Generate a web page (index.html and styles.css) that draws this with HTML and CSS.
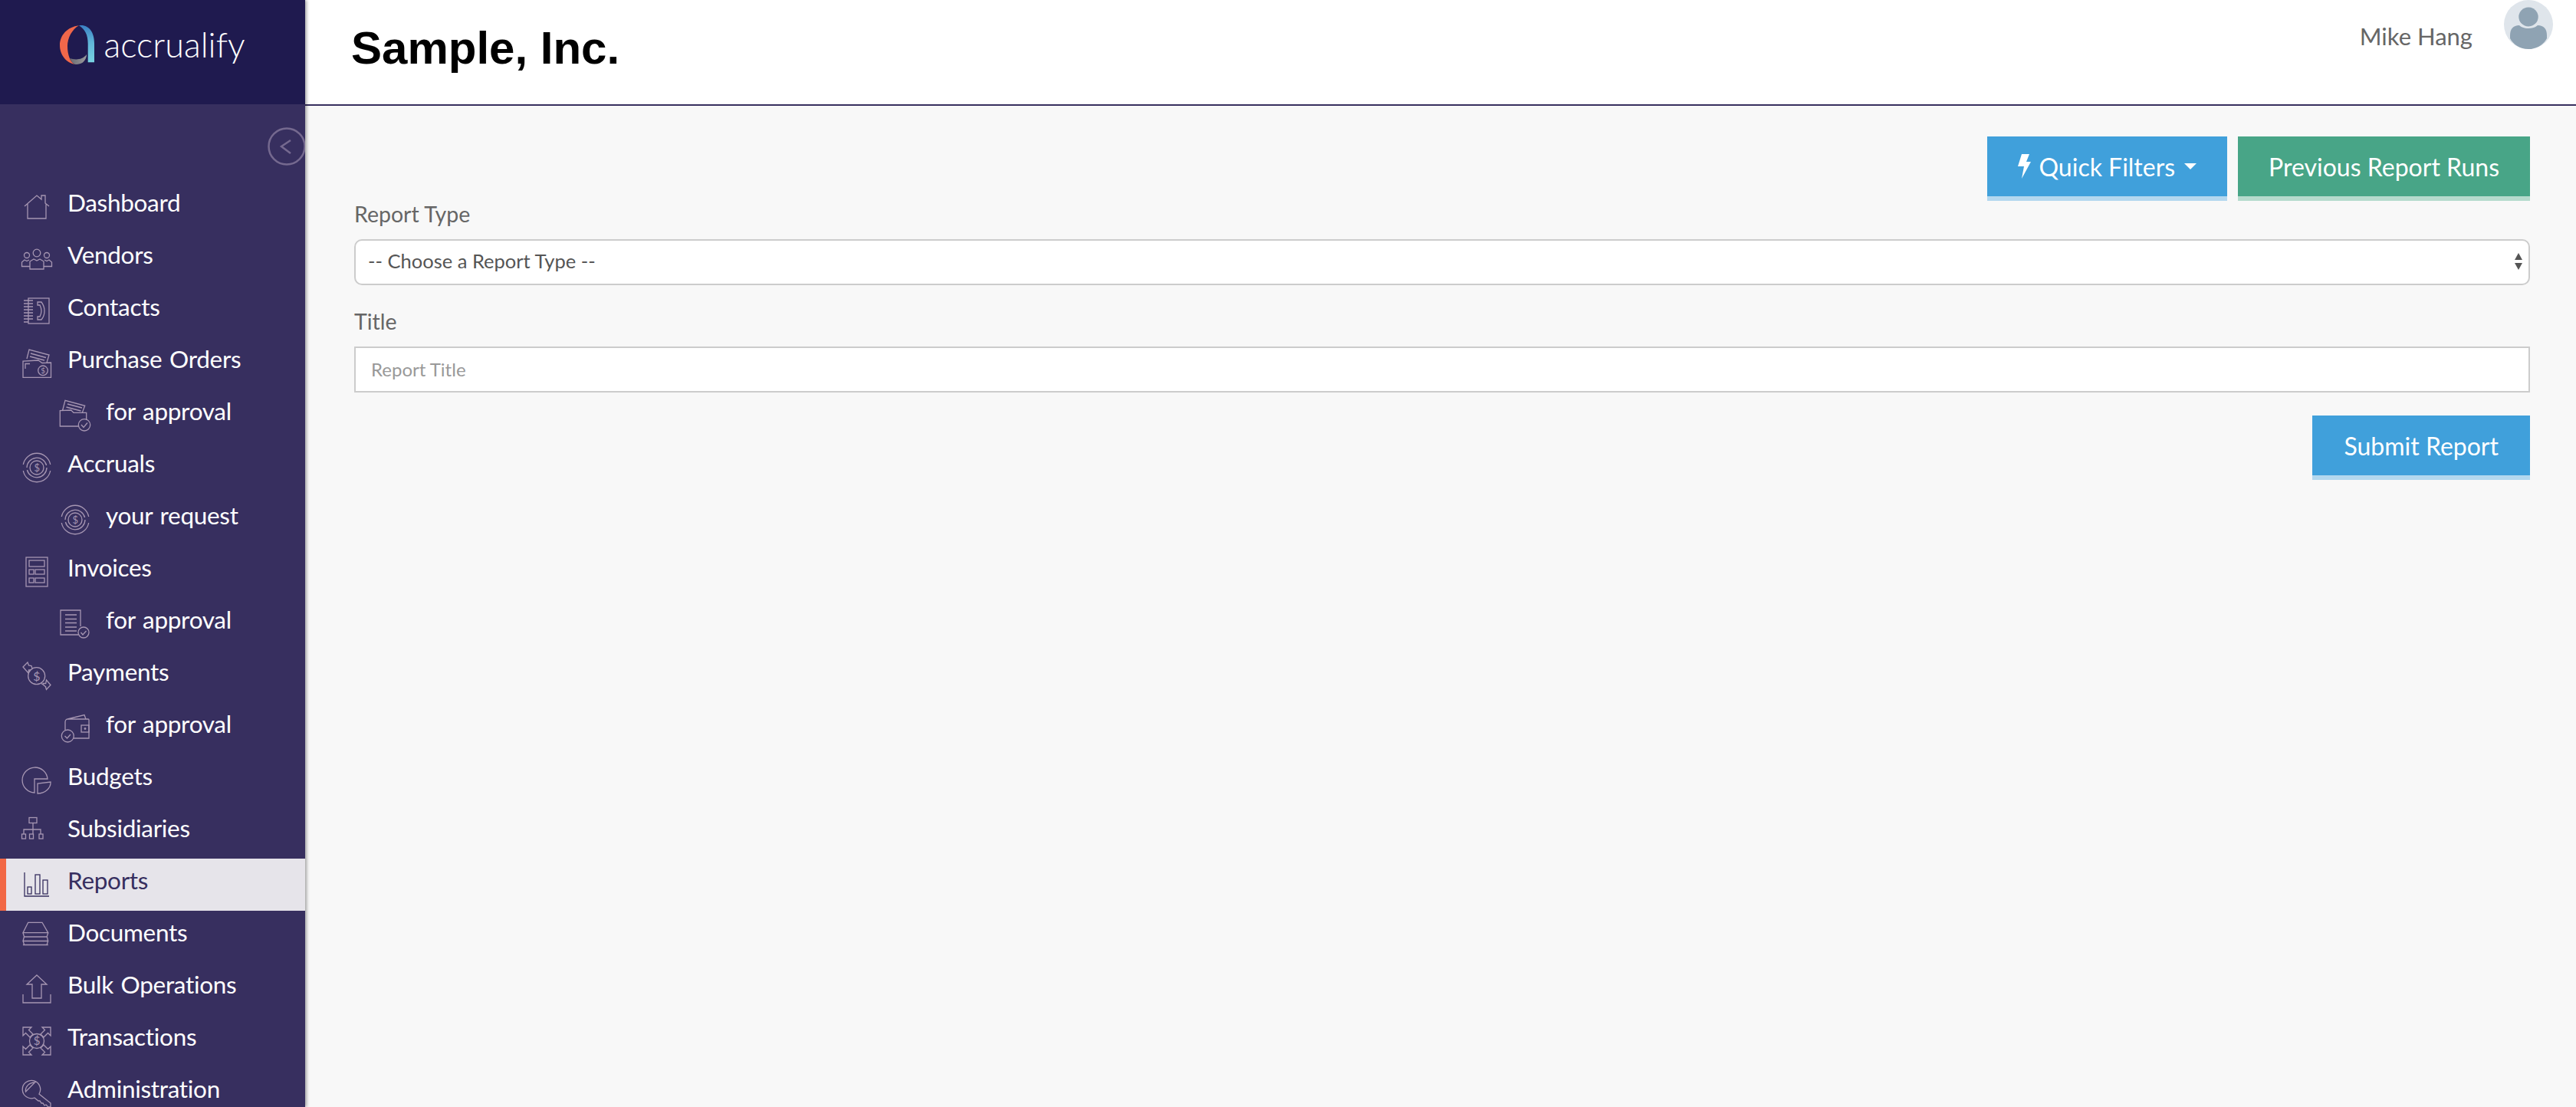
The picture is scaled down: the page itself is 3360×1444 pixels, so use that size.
FILE: index.html
```html
<!DOCTYPE html>
<html>
<head>
    <title>Reports - Sample, Inc.</title>
    <link rel="stylesheet" href="styles.css">
</head>
<body>
    <svg class="defs" width="0" height="0">
        <defs>
            <linearGradient id="ribbon" x1="0" y1="0" x2="0" y2="1">
                <stop offset="0" stop-color="#3a80c4"/>
                <stop offset="0.45" stop-color="#5fb4d8"/>
                <stop offset="1" stop-color="#79d2e2"/>
            </linearGradient>
            <linearGradient id="ribbonGray" x1="0" y1="0" x2="1" y2="0">
                <stop offset="0" stop-color="#6a6a70"/>
                <stop offset="1" stop-color="#9a9a9e"/>
            </linearGradient>
        </defs>
    </svg>

    <div class="app">
        <aside class="sidebar">
            <div class="brand">
                <svg class="brand-mark" width="46" height="52" viewBox="0 0 46 52">
                    <path fill="#f0674a" d="M25 1.300C10 3 0 14 0 27c0 12 8 23 20 25-6-2-10-12-10-24C10 18 16 6 25 1.300z"/>
                    <path fill="url(#ribbonGray)" d="M13 44c6 2 16 3 22-5 0 4-2 8-5 10.500-3 2-7 2.500-10 2.500-3-1-5-4-7-8z"/>
                    <path fill="url(#ribbon)" d="M25 1.300c12-2 20 8 20 23v25h-8.300V25C36.700 14 33 6 25 1.300z"/>
                </svg>
                <span class="brand-name">accrualify</span>
            </div>

            <button class="collapse" type="button" aria-label="Collapse menu">
                <svg width="52" height="52" viewBox="0 0 52 52"><circle cx="26" cy="26" r="23.500"/><path d="M31 18l-12 8 12 9"/></svg>
            </button>

            <nav class="menu">
                <a class="menu-item">
                    <svg class="ico" viewBox="0 0 40 40"><path d="M4 19L20 5l6 5V5h5v10l5 4M8 16v19h24V16"/></svg>
                    <span>Dashboard</span>
                </a>
                <a class="menu-item">
                    <svg class="ico" viewBox="0 0 40 40"><circle cx="20" cy="12" r="4.800"/><circle cx="7" cy="15" r="3.500"/><circle cx="33" cy="15" r="3.500"/><path d="M11 33V23l5-3 4 2 4-2 5 3v10zM11 29.500H.5V24l3.500-3 3 1.500 3-1.500M29 29.500h10.500V24L36 21l-3 1.500-3-1.500"/></svg>
                    <span>Vendors</span>
                </a>
                <a class="menu-item">
                    <svg class="ico" viewBox="0 0 40 40"><rect x="9" y="3" width="27" height="33"/><path d="M3 6h12M3 10h12M3 14h12M3 18h12M3 22h12M3 26h12M3 30h12M3 34h6M21 8h5c3 4 4 8 4 11.500s-1 8-4 11.500h-5v-4h3c1-2 2-5 2-7.500s-1-5.500-2-7.500h-3z"/></svg>
                    <span>Contacts</span>
                </a>
                <a class="menu-item">
                    <svg class="ico" viewBox="0 0 40 40"><path d="M2 38.300V17l20-1 5 3.500 11.500-.5v19.300zM5 27v-6.500h6M7 14L10 2l26 7-3 10M12 7l20 5.500M11 11l19 5"/><circle cx="28" cy="29.300" r="6.300"/><text class="ico-dollar" x="28" y="33" font-size="10">$</text></svg>
                    <span>Purchase Orders</span>
                </a>
                <a class="menu-item sub">
                    <svg class="ico" viewBox="0 0 40 40"><path d="M25 34H.3V13.700L14.700 13l3.300 3.300h16.700V26M3.700 13L7 .3l25.700 7-3.400 9M10 5l19 5M8.500 9l19 5"/><circle cx="32" cy="32.300" r="7.700"/><path d="M28 32l3 3.500 5-6"/></svg>
                    <span>for approval</span>
                </a>
                <a class="menu-item">
                    <svg class="ico" viewBox="0 0 40 40"><path d="M37.700 16A18 18 0 0 0 2.300 16M2.300 24A18 18 0 0 0 37.700 24M32.600 17A13 13 0 0 0 7 20M7.400 23A13 13 0 0 0 33 20"/><circle cx="20" cy="20" r="9"/><text class="ico-dollar" x="20" y="24.500" font-size="13">$</text></svg>
                    <span>Accruals</span>
                </a>
                <a class="menu-item sub">
                    <svg class="ico" viewBox="0 0 40 40"><path d="M37.700 16A18 18 0 0 0 2.300 16M2.300 24A18 18 0 0 0 37.700 24M32.600 17A13 13 0 0 0 7 20M7.400 23A13 13 0 0 0 33 20"/><circle cx="20" cy="20" r="9"/><text class="ico-dollar" x="20" y="24.500" font-size="13">$</text></svg>
                    <span>your request</span>
                </a>
                <a class="menu-item">
                    <svg class="ico" viewBox="0 0 40 40"><rect x="6" y="1" width="28" height="38"/><rect x="10" y="5" width="20" height="8"/><rect x="10" y="17" width="6" height="6"/><rect x="18" y="17" width="12" height="6"/><rect x="10" y="28" width="6" height="6"/><rect x="18" y="28" width="12" height="6"/></svg>
                    <span>Invoices</span>
                </a>
                <a class="menu-item sub">
                    <svg class="ico" viewBox="0 0 40 40"><path d="M24 34H1V2h26v21M7 8h15M7 13.500h15M7 18.500h15M7 24h15M7 29h15"/><circle cx="31" cy="31" r="7"/><path d="M27.500 31l2.500 3 4.500-5"/></svg>
                    <span>for approval</span>
                </a>
                <a class="menu-item">
                    <svg class="ico" viewBox="0 0 40 40"><circle cx="19.700" cy="19.700" r="11"/><text class="ico-dollar" x="19.700" y="25.500" font-size="16">$</text><path d="M14 10l-1-3.500L9.500 6 8 2 2 8l7 8 .5-4H12M26 30l1 0 4.700 4-.2.200 1 3.300L38 31.500 32.500 25l-.8 4.500H28"/></svg>
                    <span>Payments</span>
                </a>
                <a class="menu-item sub">
                    <svg class="ico" viewBox="0 0 40 40"><path d="M7 22V12c0-2 1-4 3-4h27a1 1 0 0 1 1 1v24H18M10 8l22-5.500 2 5.500"/><rect x="28" y="16" width="10" height="9"/><circle cx="33" cy="20.500" r=".8"/><circle cx="10.300" cy="30" r="8"/><path d="M6.500 30l3 3 4.500-5"/></svg>
                    <span>for approval</span>
                </a>
                <a class="menu-item">
                    <svg class="ico" viewBox="0 0 40 40"><path d="M17 36A16.500 16.500 0 1 1 34 18H17v18zM21 37V24l17-2c.5 8-7 15-17 15z"/></svg>
                    <span>Budgets</span>
                </a>
                <a class="menu-item">
                    <svg class="ico" viewBox="0 0 40 40"><rect x="10" y="0.500" width="10" height="7"/><rect x="0.500" y="22" width="5" height="6"/><rect x="10.500" y="22" width="5" height="6"/><rect x="23" y="22" width="5" height="6"/><path d="M15 7.500V22M3 22v-6h22v6"/></svg>
                    <span>Subsidiaries</span>
                </a>
                <a class="menu-item active">
                    <svg class="ico" viewBox="0 0 40 40"><path d="M4 4v31h32"/><rect x="8" y="23" width="5" height="9"/><rect x="18" y="7" width="6" height="25"/><rect x="28" y="14" width="6" height="18"/></svg>
                    <span>Reports</span>
                </a>
                <a class="menu-item">
                    <svg class="ico" viewBox="0 0 40 40"><path d="M8.700 1.300H27l7.700 13.400H2zM2 14.700l1.500 5L2 25.500l1.500 4.500L2 30.500h32.700L33.200 30l1.500-4.500-1.500-5.800 1.500-5M3.500 20h29.700M2.500 25.500h31.700"/></svg>
                    <span>Documents</span>
                </a>
                <a class="menu-item">
                    <svg class="ico" viewBox="0 0 40 40"><path d="M20 2l13 12h-7v18H14V14H7zM2 27v11h36V27"/></svg>
                    <span>Bulk Operations</span>
                </a>
                <a class="menu-item">
                    <svg class="ico" viewBox="0 0 40 40"><circle cx="20" cy="20" r="9.500"/><text class="ico-dollar" x="20" y="25" font-size="15">$</text><path d="M2 2h11L9.500 5.500 15 11l-4 4-5.500-5.500L2 13zM38 2H27l3.500 3.500L25 11l4 4 5.500-5.500L38 13zM2 38h11l-3.500-3.500L15 29l-4-4-5.500 5.500L2 27zM38 38H27l3.500-3.500L25 29l4-4 5.500 5.500L38 27z"/></svg>
                    <span>Transactions</span>
                </a>
                <a class="menu-item">
                    <svg class="ico" viewBox="0 0 40 40"><path d="M23 21A11.700 11.700 0 1 0 17 26l5 4 2 0 2 3 2 0 2 3 2-1 3 3h3v-5zM5.500 18c-1-7 5-12 12-12z"/></svg>
                    <span>Administration</span>
                </a>
            </nav>
        </aside>

        <div class="page">
            <header class="topbar">
                <h1>Sample, Inc.</h1>
                <div class="user">
                    <span class="user-name">Mike Hang</span>
                    <svg class="avatar" width="64" height="64" viewBox="0 0 64 64">
                        <circle cx="32" cy="32" r="32" fill="#dfe5eb"/>
                        <ellipse cx="32" cy="22" rx="12.700" ry="12.500" fill="#8fa3b3"/>
                        <path fill="#8fa3b3" d="M8 50v-4c0-8 4-13 12-13 2 2 6 4 12 4s10-2 12-4c8 0 12 5 12 13v4c-4 8-13 14-24 14S12 58 8 50z"/>
                    </svg>
                </div>
            </header>

            <main class="content">
                <div class="toolbar">
                    <button class="btn btn-blue" type="button">
                        <svg class="bolt" width="17" height="32" viewBox="0 0 17 32"><path fill="#fff" d="M5 0h10l-4 10h6L5 32l3-16H0z"/></svg>
                        Quick Filters
                        <span class="caret"></span>
                    </button>
                    <button class="btn btn-green" type="button">Previous Report Runs</button>
                </div>

                <form class="report-form">
                    <div class="field">
                        <label for="reportType">Report Type</label>
                        <div class="select-wrap">
                            <select id="reportType">
                                <option>-- Choose a Report Type --</option>
                            </select>
                            <span class="select-arrows"></span>
                        </div>
                    </div>
                    <div class="field">
                        <label for="reportTitle">Title</label>
                        <input id="reportTitle" type="text" placeholder="Report Title">
                    </div>
                    <div class="form-actions">
                        <button class="btn btn-blue" type="button">Submit Report</button>
                    </div>
                </form>
            </main>
        </div>
    </div>
</body>
</html>
```

FILE: styles.css
```css
html, body {
    margin: 0;
    height: 100%;
    overflow: hidden;
}

body {
    font-family: Lato, "Open Sans", sans-serif;
    color: #666;
    background: #f8f8f8;
}

.defs {
    position: absolute;
}

.app {
    display: flex;
    height: 100vh;
}

/* sidebar */
.sidebar {
    position: relative;
    z-index: 2;
    flex: 0 0 398px;
    background: #372f5f;
    box-shadow: 2px 0 4px rgba(0,0,0,0.35);
    overflow: hidden;
}

.brand {
    display: flex;
    align-items: center;
    justify-content: center;
    gap: 11px;
    height: 136px;
    box-sizing: border-box;
    padding-bottom: 20px;
    background: #1f1a4f;
}

.brand-name {
    font-size: 45px;
    font-weight: 300;
    color: #fff;
}

.collapse {
    position: absolute;
    top: 165px;
    left: 348px;
    width: 52px;
    height: 52px;
    padding: 0;
    border: 0;
    background: none;
}

.collapse svg {
    display: block;
    fill: none;
    stroke: #75698f;
    stroke-width: 2.5;
}

.menu {
    margin-top: 100px;
}

.menu-item {
    display: flex;
    align-items: center;
    gap: 20px;
    height: 68px;
    box-sizing: border-box;
    padding-left: 28px;
    font-size: 31.5px;
    letter-spacing: -0.3px;
    word-spacing: 2px;
    color: #fff;
}

.menu-item span {
    margin-bottom: 12px;
}

.menu-item.sub {
    padding-left: 78px;
}

.menu-item.active {
    padding-left: 20px;
    border-left: 8px solid #f26745;
    background: #e6e4ea;
    color: #372f5f;
}

.ico {
    flex: 0 0 40px;
    width: 40px;
    height: 40px;
    overflow: visible;
    fill: none;
    stroke: #a696b2;
    stroke-width: 1.3;
}

.active .ico {
    stroke: #372f5f;
}

.ico-dollar {
    fill: #a696b2;
    stroke: none;
    text-anchor: middle;
    font-family: Lato, sans-serif;
}

/* top bar */
.page {
    flex: 1;
    min-width: 0;
}

.topbar {
    display: flex;
    justify-content: space-between;
    height: 138px;
    box-sizing: border-box;
    padding: 0 30px 0 60px;
    background: #fff;
    border-bottom: 2px solid #372f5f;
}

.topbar h1 {
    margin: 0;
    padding-top: 28px;
    font-family: "Liberation Sans", Arial, sans-serif;
    font-size: 60px;
    line-height: 70px;
    font-weight: bold;
    color: #000;
}

.user {
    display: flex;
    align-items: flex-start;
    gap: 41px;
}

.user-name {
    padding-top: 27px;
    font-size: 31px;
    line-height: 40px;
    color: #666;
}

.avatar {
    display: block;
}

/* content */
.content {
    padding: 40px 60px 0 64px;
}

.toolbar,
.form-actions {
    display: flex;
    justify-content: flex-end;
    gap: 14px;
}

.btn {
    display: flex;
    align-items: center;
    height: 84px;
    padding: 0 40px;
    border: 0;
    border-bottom: 6px solid;
    font-family: inherit;
    font-size: 32px;
    color: #fff;
}

.form-actions .btn {
    padding: 0 41px;
}

.btn-blue {
    background: #40a0db;
    border-color: #b3d8ef;
}

.btn-green {
    background: #48a587;
    border-color: #b5dbcd;
}

.bolt {
    margin-right: 10px;
}

.caret {
    width: 0;
    height: 0;
    margin-left: 12px;
    border-top: 8px solid #fff;
    border-left: 8px solid transparent;
    border-right: 8px solid transparent;
}

.field {
    margin-bottom: 30px;
}

.field label {
    display: block;
    margin-bottom: 16px;
    font-size: 28.5px;
    line-height: 34px;
    color: #666;
}

.select-wrap {
    position: relative;
}

select,
input {
    display: block;
    width: 100%;
    height: 60px;
    box-sizing: border-box;
    border: 2px solid #ccc;
    background: #fff;
    font-family: inherit;
    color: #555;
    outline: none;
}

select {
    padding: 0 16px 4px;
    border-radius: 10px;
    font-size: 25.5px;
    appearance: none;
}

input {
    padding: 0 20px 2px;
    font-size: 24px;
}

input::placeholder {
    color: #999;
}

.select-arrows {
    position: absolute;
    top: 18px;
    right: 10px;
    width: 0;
    height: 0;
    border-bottom: 9px solid #555;
    border-left: 5px solid transparent;
    border-right: 5px solid transparent;
}

.select-arrows::after {
    content: "";
    position: absolute;
    top: 13px;
    left: -5px;
    border-top: 9px solid #555;
    border-left: 5px solid transparent;
    border-right: 5px solid transparent;
}
```
